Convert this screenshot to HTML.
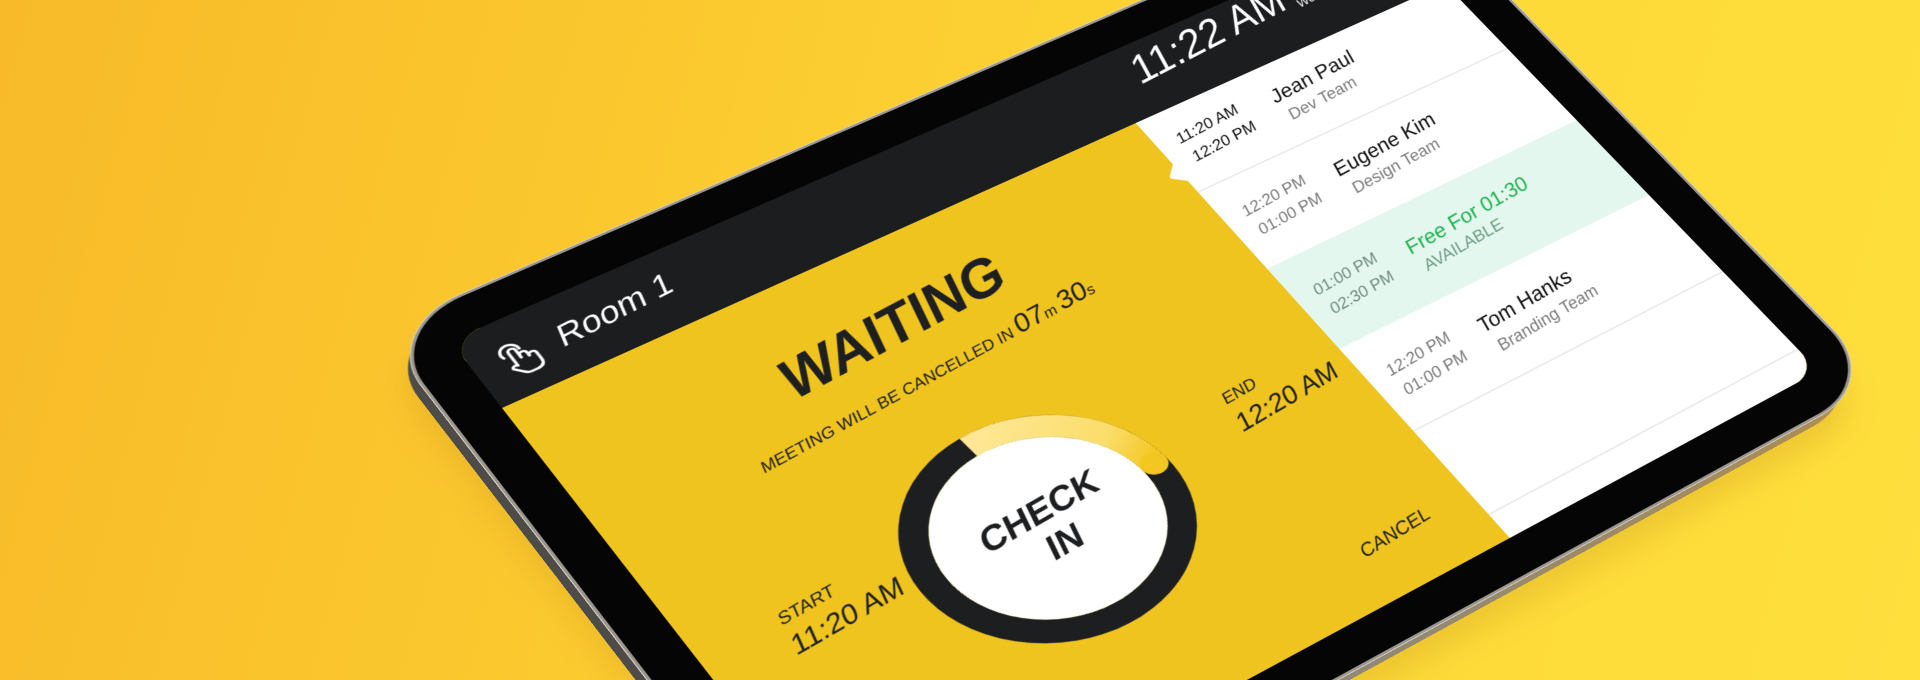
<!DOCTYPE html>
<html><head><meta charset="utf-8">
<style>
html,body{margin:0;padding:0;width:1920px;height:680px;overflow:hidden}
#root{position:relative;width:1920px;height:680px;overflow:hidden;
background:linear-gradient(105deg,#F8BA29 0%,#FBCA2F 35%,#FDD836 65%,#FEDF3C 100%);}
.plane{position:absolute;left:0;top:0;width:0;height:0;transform-origin:0 0;
transform:matrix3d(0.97653,-0.36129,0,0.00012273, 0.44315,0.59139,0,-0.0000879, 0,0,1,0, 502,408,0,1);}
.thick{transform:translate(-6px,13px) matrix3d(0.97653,-0.36129,0,0.00012273, 0.44315,0.59139,0,-0.0000879, 0,0,1,0, 502,408,0,1);}
.shadow{transform:translate(-2px,30px) matrix3d(0.97653,-0.36129,0,0.00012273, 0.44315,0.59139,0,-0.0000879, 0,0,1,0, 502,408,0,1);}
.box{position:absolute;left:-48px;top:-156px;width:1276px;height:914px;border-radius:86px;}
.screen{position:absolute;left:0;top:-108px;width:1180px;height:818px;border-radius:34px;overflow:hidden;}
text{font-family:"Liberation Sans","DejaVu Sans",sans-serif;transform:rotate(-4deg) skewX(-16deg) scaleY(1.08);transform-box:fill-box;transform-origin:50% 80%}
</style></head><body>
<div id="root">
<div class="plane shadow"><div class="box" style="background:rgba(150,90,0,0.16);filter:blur(18px)"></div></div>
<div class="plane thick"><div class="box" style="background:linear-gradient(90deg,#4d4b47 0%,#8a8780 35%,#9c8a66 70%,#b08e50 100%);"></div></div>
<div class="plane"><div class="box" style="background:#050505;box-shadow:0 0 0 3px #9a968e, 0 0 0 4px #d8d2c2;"></div>
<div class="screen">
<svg width="1180" height="818" viewBox="0 0 1180 818" xmlns="http://www.w3.org/2000/svg">
<defs>
<linearGradient id="arc" x1="0" y1="0" x2="1" y2="1">
<stop offset="0" stop-color="#FFE796"/><stop offset="0.7" stop-color="#FBDD6A"/><stop offset="1" stop-color="#F3C620"/>
</linearGradient>
</defs>
<rect width="1180" height="818" fill="#EFC41E"/>
<rect width="1180" height="108" fill="#1B1D1F"/>
<rect x="757" y="108" width="423" height="710" fill="#ffffff"/>
<rect x="757" y="367" width="423" height="138" fill="#E3F7EE"/>
<g stroke="#e9e9e9" stroke-width="2">
<line x1="757" y1="232" x2="1180" y2="232"/>
<line x1="757" y1="643" x2="1180" y2="643"/>
<line x1="757" y1="780" x2="1180" y2="780"/>
</g>
<path d="M759 180 L744 196 Q742 199 745 201 L759 214 Z" fill="#ffffff"/>

<g fill="none" stroke="#ffffff" stroke-width="3.2" stroke-linecap="round" stroke-linejoin="round">
<path d="M33 50 a10 10 0 1 1 19 -4"/>
<path d="M40 66 L40 46 a4 4 0 0 1 8 0 L48 58 L48 55 a4 4 0 0 1 8 0 L56 60 a4 4 0 0 1 8 0 L64 70 Q64 80 54 80 L48 80 Q44 80 41 76 L34 68 a3.5 3.5 0 0 1 6 -2"/>
</g>
<text x="88" y="64" font-size="38" fill="#ffffff">Room 1</text>
<text x="793" y="54" font-size="54" fill="#ffffff" textLength="210" lengthAdjust="spacingAndGlyphs">11:22 AM</text>
<text x="1014" y="28" font-size="16" fill="#ffffff">2023.06.14</text>
<text x="1014" y="50" font-size="16" fill="#ffffff">Wednesday</text>

<text x="378" y="248" font-size="68" font-weight="bold" text-anchor="middle" fill="#1E1F20" textLength="270" lengthAdjust="spacingAndGlyphs">WAITING</text>
<text x="378" y="311" font-size="19" text-anchor="middle" fill="#1E1F20">MEETING WILL BE CANCELLED IN <tspan font-size="32">07</tspan><tspan font-size="18">m </tspan><tspan font-size="32">30</tspan><tspan font-size="18">s</tspan></text>

<circle cx="371" cy="542" r="135" fill="none" stroke="#1C1E20" stroke-width="30"/>
<path d="M359.2 407.5 A135 135 0 0 1 505.5 530.2" fill="none" stroke="url(#arc)" stroke-width="30"/>
<circle cx="505.5" cy="530.2" r="15" fill="#F3C620"/>
<circle cx="371" cy="542" r="120" fill="#ffffff"/>
<text x="371" y="534" font-size="40" font-weight="bold" text-anchor="middle" fill="#1C1E20">CHECK</text>
<text x="371" y="582" font-size="40" font-weight="bold" text-anchor="middle" fill="#1C1E20">IN</text>

<text x="87" y="502" font-size="20" fill="#1E1F20">START</text>
<text x="80" y="540" font-size="31" fill="#1E1F20">11:20 AM</text>
<text x="612" y="503" font-size="20" fill="#1E1F20">END</text>
<text x="605" y="541" font-size="31" fill="#1E1F20">12:20 AM</text>
<text x="615" y="753" font-size="22" fill="#1E1F20">CANCEL</text>

<text x="780" y="158" font-size="20" fill="#111">11:20 AM</text>
<text x="780" y="190" font-size="20" fill="#111">12:20 PM</text>
<text x="904" y="161" font-size="26" fill="#111">Jean Paul</text>
<text x="906" y="193" font-size="21" fill="#7a7a7a">Dev Team</text>

<text x="780" y="288" font-size="20" fill="#777">12:20 PM</text>
<text x="780" y="320" font-size="20" fill="#777">01:00 PM</text>
<text x="900" y="291" font-size="26" fill="#111">Eugene Kim</text>
<text x="902" y="323" font-size="21" fill="#7a7a7a">Design Team</text>

<text x="780" y="426" font-size="20" fill="#6f8a7e">01:00 PM</text>
<text x="780" y="458" font-size="20" fill="#6f8a7e">02:30 PM</text>
<text x="900" y="429" font-size="26" fill="#1DB34E">Free For 01:30</text>
<text x="902" y="461" font-size="21" fill="#6f9a84">AVAILABLE</text>

<text x="780" y="564" font-size="20" fill="#777">12:20 PM</text>
<text x="780" y="596" font-size="20" fill="#777">01:00 PM</text>
<text x="900" y="567" font-size="26" fill="#111">Tom Hanks</text>
<text x="902" y="599" font-size="21" fill="#7a7a7a">Branding Team</text>
</svg>
</div></div>
</div>
</body></html>
